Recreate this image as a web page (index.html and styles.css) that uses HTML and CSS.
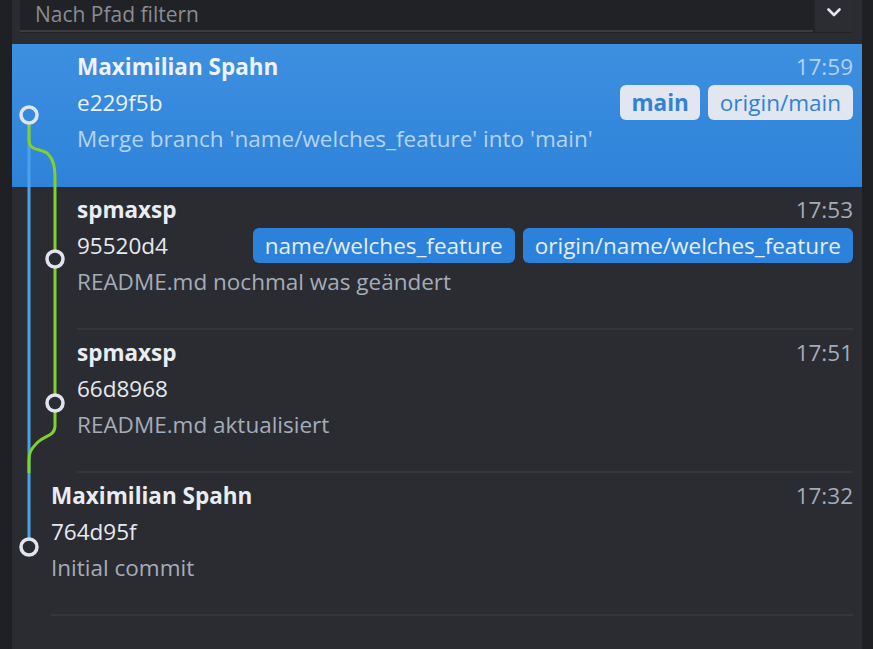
FILE: index.html
```html
<!DOCTYPE html>
<html lang="de">
<head>
<meta charset="utf-8">
<title>Commits</title>
<link rel="stylesheet" href="styles.css">
</head>
<body>
<div class="app">
  <div class="filter">
    <div class="filter-input">Nach Pfad filtern</div>
    <div class="filter-btn">
      <svg width="14" height="9" viewBox="0 0 14 9"><path d="M1.5 1.5 L7 7 L12.5 1.5" fill="none" stroke="#e2e5ec" stroke-width="2.6" stroke-linecap="round" stroke-linejoin="round"/></svg>
    </div>
  </div>
  <div class="list">
    <svg class="graph" width="60" height="600" viewBox="12 44 60 600">
      <line x1="29" y1="124" x2="29" y2="538" stroke="#4aa3ea" stroke-width="3"/>
      <path d="M29 124 V140 C29 152 42 148 48 154 C54 160 55 168 55 180 V250" fill="none" stroke="#80d12c" stroke-width="3"/>
      <path d="M55 268 V394" fill="none" stroke="#80d12c" stroke-width="3"/>
      <path d="M55 412 V426 C55 436 44 436 38 442 C31 449 29 452 29 460 V473" fill="none" stroke="#80d12c" stroke-width="3"/>
      <circle cx="29" cy="115" r="8" fill="none" stroke="#e0e4ee" stroke-width="3.5"/>
      <circle cx="55" cy="259" r="8" fill="none" stroke="#e0e4ee" stroke-width="3.5"/>
      <circle cx="55" cy="403" r="8" fill="none" stroke="#e0e4ee" stroke-width="3.5"/>
      <circle cx="29" cy="547" r="8" fill="none" stroke="#e0e4ee" stroke-width="3.5"/>
    </svg>

    <div class="commit selected">
      <div class="commit-body">
        <div class="line"><span class="author">Maximilian Spahn</span><span class="time">17:59</span></div>
        <div class="line"><span class="hash">e229f5b</span><span class="badges"><span class="badge bold">main</span><span class="badge">origin/main</span></span></div>
        <div class="line msg">Merge branch 'name/welches_feature' into 'main'</div>
      </div>
    </div>

    <div class="commit">
      <div class="commit-body">
        <div class="line"><span class="author">spmaxsp</span><span class="time">17:53</span></div>
        <div class="line"><span class="hash">95520d4</span><span class="badges"><span class="badge">name/welches_feature</span><span class="badge">origin/name/welches_feature</span></span></div>
        <div class="line msg">README.md nochmal was geändert</div>
      </div>
    </div>

    <div class="commit">
      <div class="commit-body">
        <div class="line"><span class="author">spmaxsp</span><span class="time">17:51</span></div>
        <div class="line"><span class="hash">66d8968</span></div>
        <div class="line msg">README.md aktualisiert</div>
      </div>
    </div>

    <div class="commit root">
      <div class="commit-body">
        <div class="line"><span class="author">Maximilian Spahn</span><span class="time">17:32</span></div>
        <div class="line"><span class="hash">764d95f</span></div>
        <div class="line msg">Initial commit</div>
      </div>
    </div>
  </div>
</div>
</body>
</html>
```

FILE: styles.css
```css
* { box-sizing: border-box; }
html, body {
  margin: 0;
  padding: 0;
  background: #1f2023;
  height: 100%;
  overflow: hidden;
}
body {
  font-family: "Open Sans", "Noto Sans", sans-serif;
  font-size: 22.5px;
}
.app {
  margin-left: 12px;
  width: 850px;
  height: 649px;
  background: #2b2c31;
  display: flex;
  flex-direction: column;
}
.filter {
  display: flex;
  height: 33px;
  margin: 0 9px 11px 8px;
  background: #232428;
}
.filter-input {
  flex: 1;
  height: 32px;
  background: #212226;
  border-bottom: 2px solid #3b3c41;
  padding-left: 15px;
  color: #898c93;
  font-size: 21px;
  line-height: 29px;
}
.filter-btn {
  width: 38px;
  height: 32px;
  margin-left: 2px;
  background: #2c2d32;
  display: flex;
  align-items: center;
  justify-content: center;
  padding-bottom: 8px;
}
.list {
  position: relative;
  flex: 1;
}
.graph {
  position: absolute;
  left: 0;
  top: 0;
  z-index: 2;
}
.commit {
  height: 143px;
  padding: 0 9px 0 65px;
}
.commit.root { padding-left: 39px; }
.commit.selected {
  background: linear-gradient(#3d8fe0, #2e83d9);
}
.commit-body {
  height: 143px;
  padding-top: 4px;
  border-bottom: 2px solid #35363b;
}
.selected .commit-body { border-bottom-color: transparent; }
.line {
  display: flex;
  align-items: center;
  height: 36px;
  white-space: nowrap;
}
.author {
  font-weight: 700;
  color: #e9ecf2;
}
.time {
  margin-left: auto;
  color: #a3abb7;
}
.hash { color: #e6e9f0; }
.msg { color: #a4acb9; }
.badges {
  margin-left: auto;
  display: flex;
  gap: 8px;
}
.badge {
  height: 35px;
  line-height: 35px;
  padding: 0 12px;
  border-radius: 6px;
  background: #2c82db;
  color: #e6edf8;
}
.badge.bold { font-weight: 700; padding: 0 11px; }
.selected .author { color: #eef2f9; }
.selected .hash { color: #eaf1fa; }
.selected .msg { color: #b5d3f3; }
.selected .time { color: #b3d2f4; }
.selected .badge {
  background: #e2e6f1;
  color: #2f82d8;
}
```
